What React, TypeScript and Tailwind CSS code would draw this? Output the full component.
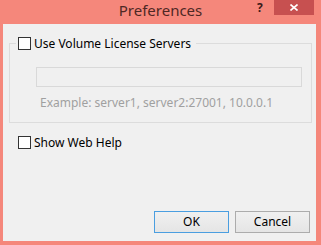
import React from 'react';

const ui = { fontFamily: '"Noto Sans", "Open Sans", Arial, sans-serif' };

function Check({ label }: { label: string }) {
  return (
    <span className="flex items-center h-[13px]">
      <span className="w-[13px] h-[13px] bg-white border border-[#333333] shrink-0" />
      <span className="ml-[3px] text-[12px] leading-[13px] text-black">{label}</span>
    </span>
  );
}

function Button({ label, isDefault }: { label: string; isDefault?: boolean }) {
  return (
    <button
      className={`w-[75px] h-[22px] text-[12px] text-black border bg-gradient-to-b from-[#f0f0f0] to-[#e5e5e5] ${
        isDefault ? 'border-[#4a9ee0]' : 'border-[#acacac]'
      }`}
      style={ui}
    >
      {label}
    </button>
  );
}

export default function App() {
  return (
    <div className="w-[321px] h-[245px] bg-[#f5877b] flex flex-col overflow-hidden select-none" style={ui}>
      {/* title bar */}
      <div className="relative h-[24px] shrink-0">
        <div className="absolute left-0 right-0 top-0 text-center text-[15px] leading-[20px] text-[#4e2824]">
          Preferences
        </div>
        <span className="absolute left-[257px] top-[1px] text-[12px] leading-[14px] font-bold text-[#3a1a18]">?</span>
        <div className="absolute left-[274px] top-0 w-[40px] h-[15px] bg-[#c75050] flex items-center justify-center">
          <svg width="8" height="7" viewBox="0 0 8 7">
            <path d="M0.5 0.5 L7.5 6.5 M7.5 0.5 L0.5 6.5" stroke="#ffffff" strokeWidth="1.6" />
          </svg>
        </div>
      </div>

      {/* client area */}
      <div className="flex-1 ml-[3px] mr-[5px] mb-[4px] bg-[#f0f0f0] flex flex-col">
        <fieldset className="mt-[13px] ml-[6px] mr-[4px] border border-[#dcdcdc] p-0 pb-[11px] flex flex-col">
          <legend className="ml-[6px] px-[2px] pr-[5px]">
            <Check label="Use Volume License Servers" />
          </legend>
          <div className="mt-[17px] ml-[26px] mr-[9px] h-[20px] border border-[#d9d9d9] bg-[#f0f0f0]" />
          <div className="mt-[8px] ml-[30px] text-[12px] leading-[16px] text-[#a0a0a0]">
            Example: server1, server2:27001, 10.0.0.1
          </div>
        </fieldset>

        <div className="mt-[13px] ml-[15px]">
          <Check label="Show Web Help" />
        </div>

        <div className="flex-1" />

        <div className="flex justify-end gap-[6px] mr-[6px] mb-[8px]">
          <Button label="OK" isDefault />
          <Button label="Cancel" />
        </div>
      </div>
    </div>
  );
}
